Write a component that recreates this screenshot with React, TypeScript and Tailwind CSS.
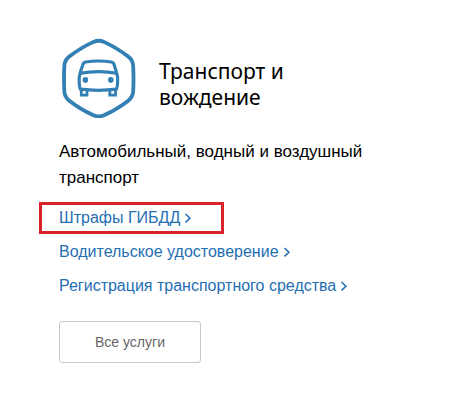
interface ServiceLinkProps {
  title: string;
  href: string;
  highlighted?: boolean;
}

const links: ServiceLinkProps[] = [
  { title: "Штрафы ГИБДД", href: "#fines", highlighted: true },
  { title: "Водительское удостоверение", href: "#license" },
  { title: "Регистрация транспортного средства", href: "#registration" },
];

function CarIcon() {
  return (
    <svg
      className="h-20 w-20 shrink-0 text-[#3280b4]"
      viewBox="0 0 80 80"
      fill="none"
      stroke="currentColor"
      strokeWidth="3.8"
      strokeLinejoin="round"
      aria-hidden="true"
    >
      <path d="M34.5 3.9 Q39.8 1.6 45 3.9 Q59 10.5 69.5 18.8 Q74.1 22.5 74.2 28.5 Q74.8 40.6 74.2 52.8 Q74.1 58.7 69.5 62.4 Q59 70.7 45 77.3 Q39.8 79.6 34.5 77.3 Q20.5 70.7 10 62.4 Q5.4 58.7 5.3 52.8 Q4.7 40.6 5.3 28.5 Q5.4 22.5 10 18.8 Q20.5 10.5 34.5 3.9 Z" />
      <g strokeWidth="3.2">
        <path d="M26.5 24 Q39.5 22 52.5 24 Q54.3 24.4 55 26.2 L57.4 34 Q59.2 38.5 58.6 45 Q58.4 48 57.6 51.2 Q39.5 53.4 21.2 51.2 Q20.4 48 20.2 45 Q19.6 38.5 21.4 34 L24 26.2 Q24.7 24.4 26.5 24 Z" />
        <path d="M20.5 35.3 Q39.5 32.1 58.5 35.3" />
        <path strokeWidth="2.8" strokeLinejoin="miter" d="M22.3 51 V57.2 H28 V52 M50.8 52 V57.2 H56.5 V51" />
      </g>
      <circle cx="26.4" cy="41.9" r="2.8" fill="currentColor" stroke="none" />
      <circle cx="51.8" cy="41.9" r="2.8" fill="currentColor" stroke="none" />
    </svg>
  );
}

function ServiceLink({ title, href, highlighted }: ServiceLinkProps) {
  return (
    <li>
      <a
        href={href}
        className={`${
          highlighted ? "border-[#d9232b]" : "border-transparent"
        } inline-flex h-8 items-center border-3 pl-[17px] pr-[29px] text-base text-[#1f6fb2] hover:underline`}
      >
        {title}
        <svg className="ml-1 h-3 w-2" viewBox="0 0 8 12" fill="none" stroke="currentColor" strokeWidth="1.5" aria-hidden="true">
          <path d="M1.5 2 L5.9 6.2 L1.5 10.4" />
        </svg>
      </a>
    </li>
  );
}

export default function App() {
  return (
    <main className="min-h-screen bg-white px-10 pt-[38px] pb-10 font-['Liberation_Sans',sans-serif] text-black">
      <section>
        <header className="flex items-center gap-5 pl-[19px]">
          <CarIcon />
          <h2 className="max-w-40 pt-3 font-['Noto_Sans','Open_Sans',sans-serif] text-[21px] leading-[26px]">
            Транспорт и вождение
          </h2>
        </header>

        <p className="mt-[21px] max-w-[360px] pl-[19px] text-[17px] leading-[26px]">
          Автомобильный, водный и воздушный транспорт
        </p>

        {/* Links */}
        <ul className="-ml-px mt-[11px] space-y-0.5">
          {links.map((link) => (
            <ServiceLink key={link.href} {...link} />
          ))}
        </ul>

        <button
          type="button"
          className="ml-[19px] mt-[19px] h-[42px] rounded-[3px] border border-[#c8c8c8] bg-white px-[35px] text-sm text-[#666] hover:bg-gray-50"
        >
          Все услуги
        </button>
      </section>
    </main>
  );
}
